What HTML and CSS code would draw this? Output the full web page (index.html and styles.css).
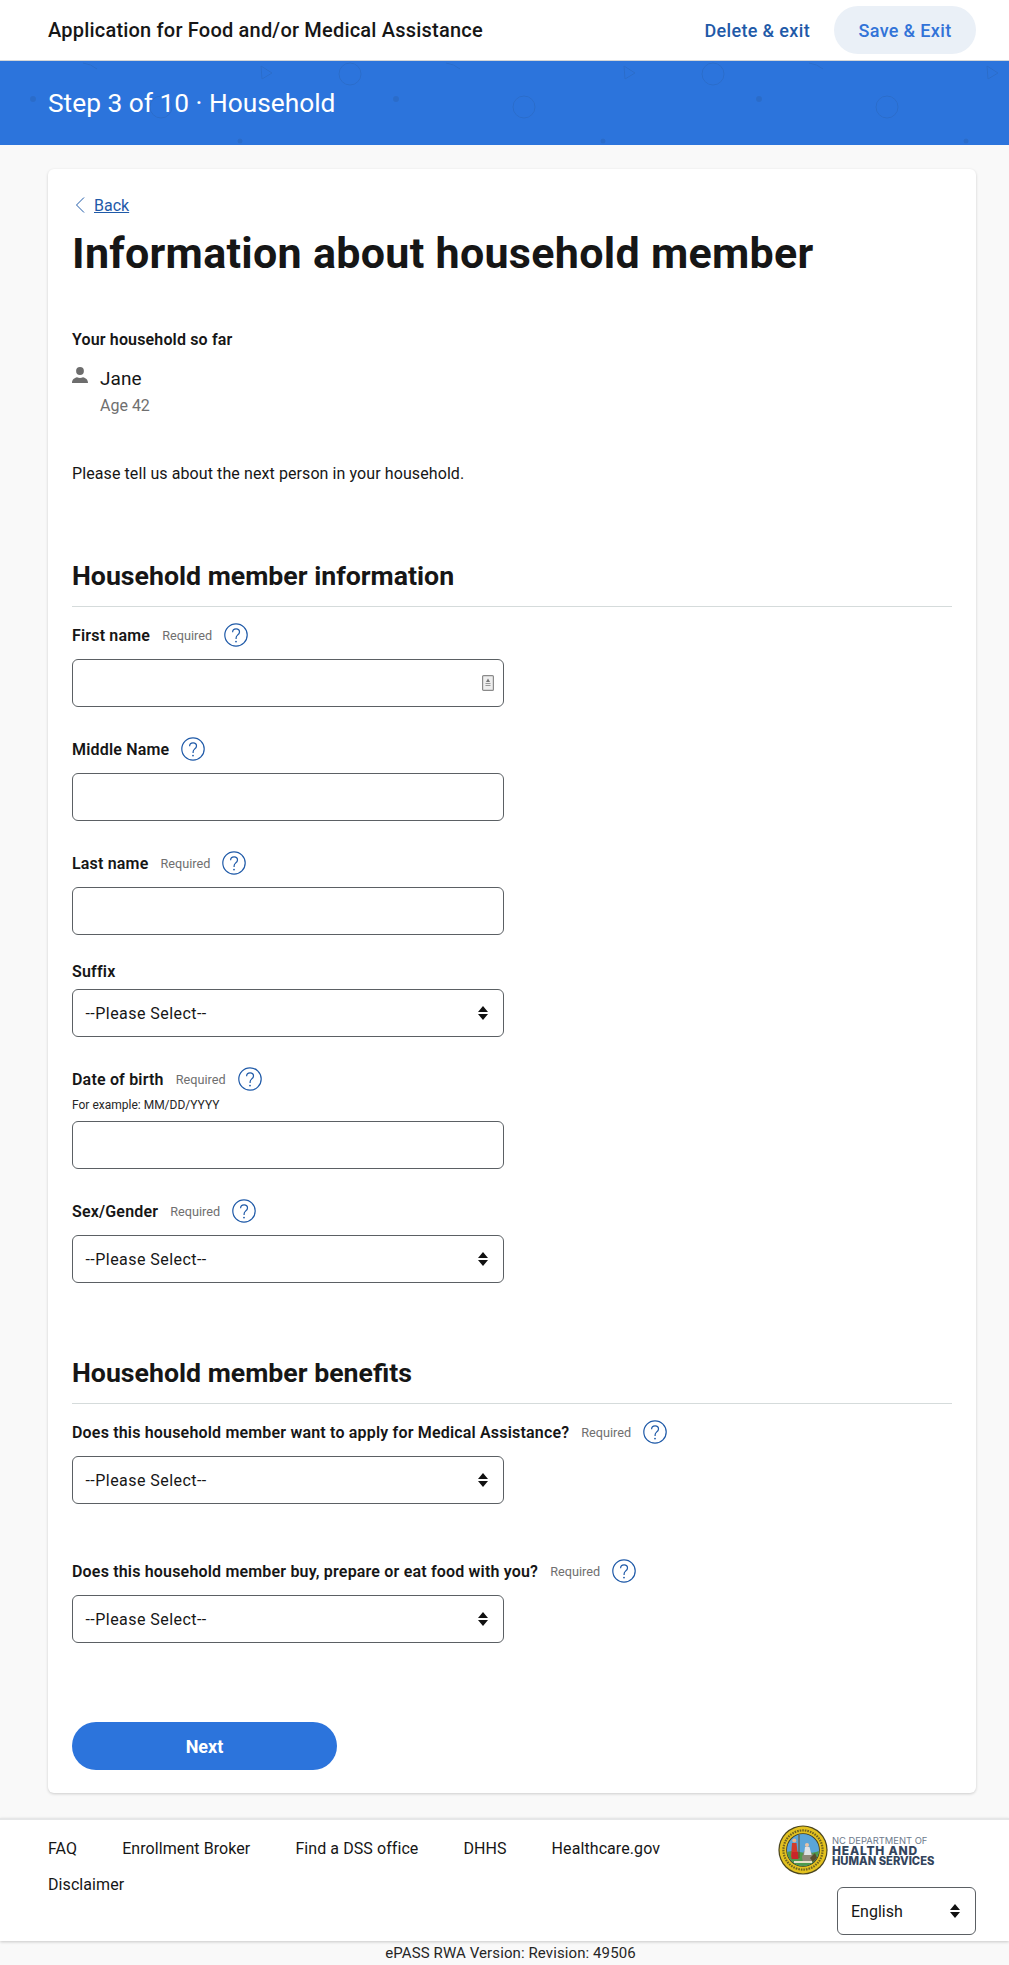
FILE: index.html
```html
<!DOCTYPE html>
<html lang="en">
<head>
<meta charset="utf-8">
<title>Application for Food and/or Medical Assistance</title>
<link rel="stylesheet" href="styles.css">
</head>
<body>
<svg class="defs" width="0" height="0" aria-hidden="true">
  <symbol id="help" viewBox="0 0 24 24">
    <circle cx="12" cy="12" r="11.2" fill="none" stroke="#1f5aa8" stroke-width="1.2"/>
    <path d="M8.600 9.300c0-2 1.500-3.400 3.500-3.400s3.400 1.300 3.400 3.100c0 1.500-.8 2.300-1.900 3.100-1 .8-1.500 1.400-1.500 2.900v.9" fill="none" stroke="#1f5aa8" stroke-width="1.2"/>
    <circle cx="12" cy="18.600" r=".9" fill="#1f5aa8"/>
  </symbol>
  <symbol id="updown" viewBox="0 0 10 14">
    <path d="M5 0 10 6H0zM0 8H10L5 14z" fill="#111"/>
  </symbol>
</svg>
<header class="topbar">
  <div class="topbar-title">Application for Food and/or Medical Assistance</div>
  <div class="topbar-actions">
    <a class="delete-link">Delete &amp; exit</a>
    <a class="save-btn">Save &amp; Exit</a>
  </div>
</header>
<section class="band">
  <svg class="band-art" width="100%" height="84" aria-hidden="true">
    <defs>
      <pattern id="bandp" x="0" y="0" width="363" height="84" patternUnits="userSpaceOnUse">
        <g fill="none" stroke="#2a6cca" stroke-width="1">
          <path d="M83 2q8 1 14 6"/>
          <path d="M261 5l11 7-10 6z"/>
          <circle cx="350" cy="13" r="11"/>
          <circle cx="161" cy="46" r="11"/>
        </g>
        <circle cx="33" cy="38" r="3" fill="#2a6cca"/>
        <circle cx="240" cy="80" r="2.500" fill="#2a6cca"/>
      </pattern>
    </defs>
    <rect width="100%" height="84" fill="url(#bandp)"/>
  </svg>
  <div class="band-title">Step 3 of 10 · Household</div>
</section>
<main class="page">
  <div class="card">
    <a class="back"><svg width="10" height="16" viewBox="0 0 10 16"><path d="M9 .5 1.500 8 9 15.500" fill="none" stroke="#1f5aa8" stroke-width="1"/></svg><span>Back</span></a>
    <h1>Information about household member</h1>
    <div class="so-far">Your household so far</div>
    <div class="member">
      <svg class="member-icon" width="16" height="16" viewBox="0 0 16 16"><circle cx="8" cy="4" r="3.900" fill="#6d6d6d"/><path d="M0 16c0-3.600 2.400-5.200 5-5.800 1.800 1 4.200 1 6 0 2.600.6 5 2.200 5 5.800z" fill="#6d6d6d"/></svg>
      <div>
        <div class="member-name">Jane</div>
        <div class="member-age">Age 42</div>
      </div>
    </div>
    <p class="intro">Please tell us about the next person in your household.</p>

    <h2 class="section-title">Household member information</h2>

    <div class="field">
      <div class="label-row"><label>First name</label><span class="req">Required</span><svg class="help"><use href="#help"/></svg></div>
      <div class="control"><svg class="contact-icon" width="12" height="16" viewBox="0 0 12 16"><rect x=".6" y=".6" width="10.800" height="14.800" rx="1" fill="#eee" stroke="#8a8a8a" stroke-width="1.200"/><path d="M6 3.500 8 7H4z" fill="#777"/><path d="M3.500 8.500h5M3.500 10.500h5" stroke="#999"/></svg></div>
    </div>
    <div class="field">
      <div class="label-row"><label>Middle Name</label><svg class="help"><use href="#help"/></svg></div>
      <div class="control"></div>
    </div>
    <div class="field">
      <div class="label-row"><label>Last name</label><span class="req">Required</span><svg class="help"><use href="#help"/></svg></div>
      <div class="control"></div>
    </div>
    <div class="field">
      <div class="label-row plain"><label>Suffix</label></div>
      <div class="control select"><span>--Please Select--</span><svg class="updown"><use href="#updown"/></svg></div>
    </div>
    <div class="field">
      <div class="label-row"><label>Date of birth</label><span class="req">Required</span><svg class="help"><use href="#help"/></svg></div>
      <div class="hint">For example: MM/DD/YYYY</div>
      <div class="control"></div>
    </div>
    <div class="field">
      <div class="label-row"><label>Sex/Gender</label><span class="req">Required</span><svg class="help"><use href="#help"/></svg></div>
      <div class="control select"><span>--Please Select--</span><svg class="updown"><use href="#updown"/></svg></div>
    </div>

    <h2 class="section-title second">Household member benefits</h2>

    <div class="field">
      <div class="label-row"><label>Does this household member want to apply for Medical Assistance?</label><span class="req">Required</span><svg class="help"><use href="#help"/></svg></div>
      <div class="control select"><span>--Please Select--</span><svg class="updown"><use href="#updown"/></svg></div>
    </div>
    <div class="field spaced">
      <div class="label-row"><label>Does this household member buy, prepare or eat food with you?</label><span class="req">Required</span><svg class="help"><use href="#help"/></svg></div>
      <div class="control select"><span>--Please Select--</span><svg class="updown"><use href="#updown"/></svg></div>
    </div>

    <button class="next" type="button">Next</button>
  </div>
</main>
<footer class="footer">
  <nav class="footer-links">
    <a>FAQ</a><a>Enrollment Broker</a><a>Find a DSS office</a><a>DHHS</a><a>Healthcare.gov</a><a>Disclaimer</a>
  </nav>
  <div class="footer-right">
    <div class="logo">
      <svg class="seal" width="50" height="50" viewBox="0 0 50 50" aria-hidden="true">
        <circle cx="25" cy="25" r="24.600" fill="#4a4520"/>
        <circle cx="25" cy="25" r="23.400" fill="#e3c21f"/>
        <circle cx="25" cy="25" r="19.600" fill="none" stroke="#6f6320" stroke-width="2.200" stroke-dasharray="1.600 1"/>
        <circle cx="25" cy="25" r="16.800" fill="#3d3a22"/>
        <circle cx="25" cy="25" r="16" fill="#5aa5d8"/>
        <path d="M9.200 27c5-2 9-1 15 .5s11 .5 16.700-1.500c-1 9-8 15-15.900 15S10.200 35 9.200 27z" fill="#4e9a4d"/>
        <path d="M26 26c4-1 8 0 9 5l-2 7H25l-1-6z" fill="#8d8777"/>
        <path d="M14 18h4.500l1.500 14h-7z" fill="#d33a2b"/>
        <path d="M14 27h6l.5 7h-7z" fill="#c9262a"/>
        <circle cx="16.300" cy="15.500" r="2" fill="#e8b48f"/>
        <path d="M21 10v23" stroke="#6b4a20" stroke-width="1"/>
        <circle cx="29" cy="20" r="2" fill="#eac4a6"/>
        <path d="M27 22h4.500l2 8H26z" fill="#dfe3e6"/>
        <path d="M32 33l5-5 2 5-4 4z" fill="#5a4c2c"/>
        <path d="M16 37h18" stroke="#e8e1c8" stroke-width="2"/>
      </svg>
      <div class="logo-text">
        <div class="logo-top">NC DEPARTMENT OF</div>
        <div class="logo-main wide">HEALTH AND</div>
        <div class="logo-main">HUMAN SERVICES</div>
      </div>
    </div>
    <div class="lang"><span>English</span><svg class="updown"><use href="#updown"/></svg></div>
  </div>
</footer>
<div class="version">ePASS RWA Version: Revision: 49506</div>
</body>
</html>
```
FILE: styles.css
```css
* { box-sizing: border-box; }
html, body { margin: 0; padding: 0; }
body {
  background: #f9f9f9;
  color: #161616;
  font-family: "Roboto", "Liberation Sans", sans-serif;
  font-size: 16px;
}
.defs { position: absolute; }
a { color: inherit; }

.topbar {
  height: 61px;
  background: #fff;
  border-bottom: 1px solid #d4d6d8;
  padding: 6px 33px 0 48px;
  display: flex;
  justify-content: space-between;
  align-items: flex-start;
}
.topbar-title { font-size: 20px; font-weight: 500; line-height: 48px; letter-spacing: .2px; }
.topbar-actions { display: flex; align-items: center; gap: 24px; }
.delete-link { color: #1f5aa8; font-size: 18px; font-weight: 500; letter-spacing: .35px; }
.save-btn {
  width: 142px; height: 48px; border-radius: 24px;
  background: #eaf0f7; color: #3273d8;
  font-size: 18px; font-weight: 500; letter-spacing: .34px;
  display: flex; align-items: center; justify-content: center;
}

.band {
  position: relative;
  height: 84px;
  background: #2c74dc;
  padding: 0 48px;
  display: flex;
  align-items: center;
  overflow: hidden;
}
.band-art { position: absolute; left: 0; top: 0; }
.band-title { position: relative; color: #fff; font-size: 26.300px; line-height: 32px; }

.page { padding: 24px 33px 25px 48px; }
.card {
  background: #fff;
  border-radius: 6px;
  box-shadow: 0 1px 3px rgba(0,0,0,.18);
  padding: 25px 24px 21px;
  height: 1624px;
}
.back { display: flex; align-items: center; gap: 9px; height: 22px; padding-left: 3px; color: #1f5aa8; font-size: 16px; }
.back span { text-decoration: underline; }
h1 {
  margin: 9px 0 0;
  font-size: 43px;
  line-height: 56px;
  font-weight: 700;
  letter-spacing: .3px;
}
.so-far { margin-top: 47px; font-size: 16px; line-height: 24px; font-weight: 600; letter-spacing: .15px; }
.member { margin-top: 15px; display: flex; gap: 12px; align-items: flex-start; }
.member-icon { flex: none; }
.member-name { font-size: 19px; line-height: 24px; letter-spacing: .1px; }
.member-age { margin-top: 3px; font-size: 16px; line-height: 24px; color: #6f6f6f; }
.intro { margin: 44px 0 0; font-size: 16px; line-height: 24px; letter-spacing: .09px; }

.section-title {
  margin: 74px 0 14px;
  padding-bottom: 14px;
  border-bottom: 1px solid #d5dbdb;
  font-size: 26.700px;
  line-height: 32px;
  font-weight: 700;
}
.section-title.second { margin-top: 74px; }

.field { margin-bottom: 28px; }
.field.spaced { margin-top: 53px; margin-bottom: 79px; }
.label-row { display: flex; align-items: center; height: 28px; margin-bottom: 10px; }
.label-row.plain { height: 16px; }
.label-row label { font-size: 16px; font-weight: 600; letter-spacing: .18px; }
.req { margin-left: 12px; font-size: 12.700px; color: #6f6f6f; }
.help { width: 24px; height: 24px; margin-left: 12px; flex: none; }
.hint { margin: -8px 0 6px; font-size: 12px; line-height: 20px; color: #262626; height: 20px; }
.control {
  position: relative;
  width: 432px; height: 48px;
  background: #fff;
  border: 1px solid #5b6064;
  border-radius: 6px;
  display: flex; align-items: center; justify-content: flex-end;
}
.control.select { justify-content: space-between; padding: 0 15px 0 12.500px; font-size: 16px; letter-spacing: .45px; }
.updown { width: 10px; height: 14px; flex: none; }
.contact-icon { margin-right: 9px; }

.next {
  display: block;
  width: 265px; height: 48px;
  border: 0; border-radius: 24px;
  background: #2c74dc; color: #fff;
  font: 700 18px "Roboto", sans-serif;
}

.footer {
  height: 123px;
  background: #fff;
  border-top: 2px solid #e6e7e8;
  box-shadow: 0 1px 3px rgba(0,0,0,.2);
  padding: 5px 33px 0 48px;
  display: flex;
  justify-content: space-between;
}
.footer-links { margin-top: 6px; width: 700px; display: flex; flex-wrap: wrap; column-gap: 45px; align-content: flex-start; font-size: 16px; line-height: 36px; letter-spacing: .08px; }
.footer-right { display: flex; flex-direction: column; align-items: flex-end; }
.logo { display: flex; align-items: center; gap: 4px; margin-right: 42px; height: 50px; }
.logo-text { color: #33445c; width: 102px; font-family: "Inter", sans-serif; padding-top: 1px; }
.logo-top { font-size: 9.400px; line-height: 10px; color: #6d7a8c; white-space: nowrap; }
.logo-main { font-size: 11.200px; line-height: 10px; font-weight: 800; white-space: nowrap; }
.logo-main.wide { font-size: 12px; letter-spacing: .8px; }
.lang {
  width: 139px; height: 48px; margin-top: 12px;
  border: 1px solid #5b6064; border-radius: 6px;
  display: flex; align-items: center; justify-content: space-between;
  padding: 0 15px 0 13px; font-size: 16px;
}
.version { padding-left: 12px; text-align: center; font-size: 15px; line-height: 24px; color: #262626; letter-spacing: .1px; }
```
